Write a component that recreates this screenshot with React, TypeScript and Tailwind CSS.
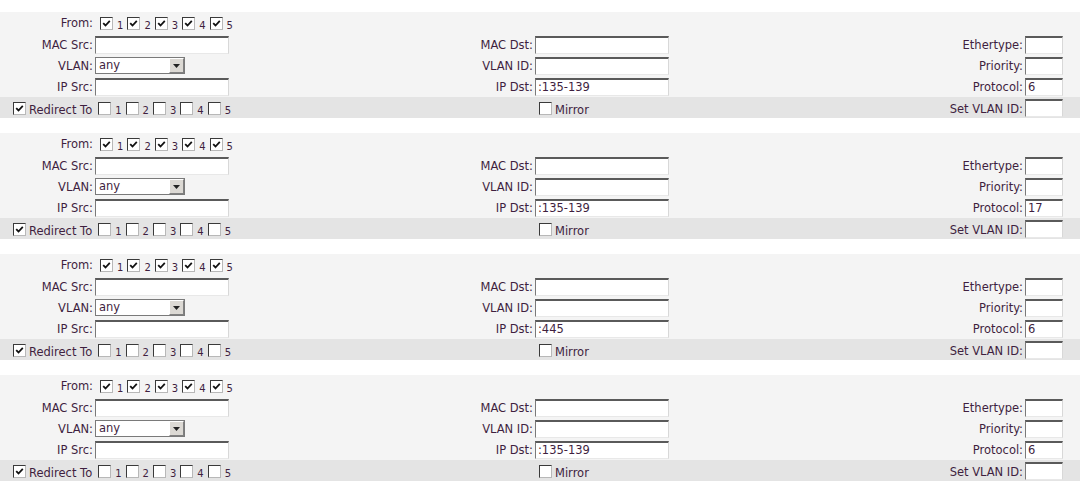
import React from "react";

interface RuleInterface {
    ipDst: string;
    protocol: string;
}

const rules: RuleInterface[] = [
    { ipDst: ":135-139", protocol: "6" },
    { ipDst: ":135-139", protocol: "17" },
    { ipDst: ":445", protocol: "6" },
    { ipDst: ":135-139", protocol: "6" },
];

const rowGrid = "grid grid-cols-[95px_365px_75px_400px_90px_55px] items-center";

function Check({ checked }: { checked: boolean }) {
    return (
        <span className="inline-flex w-[13px] h-[13px] bg-white border border-t-[#3a3a3a] border-l-[#3a3a3a] border-b-[#b8b8b8] border-r-[#b8b8b8] items-center justify-center shrink-0">
            {checked && (
                <svg width="9" height="9" viewBox="0 0 9 9">
                    <path d="M1.2 4.2 L3.5 6.5 L7.8 1.8" stroke="#111" strokeWidth="1.8" fill="none" />
                </svg>
            )}
        </span>
    );
}

function Ports({ checked }: { checked: boolean }) {
    return (
        <div className="flex items-center">
            {[1, 2, 3, 4, 5].map((n) => (
                <span key={n} className="flex items-center mr-[2px]">
                    <Check checked={checked} />
                    <span className="text-[10px] ml-[4px] mr-[2px] mt-[5px]">{n}</span>
                </span>
            ))}
        </div>
    );
}

function TextBox({ value = "", w }: { value?: string; w: string }) {
    return (
        <div className={`${w} h-[18px] bg-white border border-t-2 border-t-[#5a5a5a] border-l-[#7a7a7a] border-r-[#d8d8d8] border-b-[#e8e8e8] pl-[2px] leading-[15px] overflow-hidden`}>
            {value}
        </div>
    );
}

function Label({ text }: { text: string }) {
    return <div className="text-right pr-[2px] pt-[2px] whitespace-nowrap">{text}</div>;
}

function RuleBlock({ rule }: { rule: RuleInterface }) {
    return (
        <div className="mb-[15px]">
            <div className="bg-[#f4f4f4]">
                <div className={`${rowGrid} h-[22px]`}>
                    <Label text="From:" />
                    <div className="pl-[5px]"><Ports checked={true} /></div>
                </div>
                <div className={`${rowGrid} h-[21px]`}>
                    <Label text="MAC Src:" />
                    <TextBox w="w-[134px]" />
                    <Label text="MAC Dst:" />
                    <TextBox w="w-[134px]" />
                    <Label text="Ethertype:" />
                    <TextBox w="w-[38px]" />
                </div>
                <div className={`${rowGrid} h-[21px]`}>
                    <Label text="VLAN:" />
                    <div className="w-[90px] h-[17px] bg-white border border-[#7a7a7a] flex items-center justify-between">
                        <span className="pl-[3px]">any</span>
                        <span className="w-[15px] h-[15px] bg-[#dcd9d4] border border-t-white border-l-white border-b-[#808080] border-r-[#808080] flex items-center justify-center">
                            <svg width="7" height="4" viewBox="0 0 7 4"><path d="M0 0 H7 L3.5 4 Z" fill="#222" /></svg>
                        </span>
                    </div>
                    <Label text="VLAN ID:" />
                    <TextBox w="w-[134px]" />
                    <Label text="Priority:" />
                    <TextBox w="w-[38px]" />
                </div>
                <div className={`${rowGrid} h-[21px]`}>
                    <Label text="IP Src:" />
                    <TextBox w="w-[134px]" />
                    <Label text="IP Dst:" />
                    <TextBox w="w-[134px]" value={rule.ipDst} />
                    <Label text="Protocol:" />
                    <TextBox w="w-[38px]" value={rule.protocol} />
                </div>
            </div>
            <div className={`${rowGrid} h-[21px] bg-[#e4e4e4]`}>
                <div className="col-span-2 flex items-center pl-[13px]">
                    <Check checked={true} />
                    <span className="ml-[3px] mr-[6px] mt-[4px]">Redirect To</span>
                    <Ports checked={false} />
                </div>
                <div />
                <div className="flex items-center pl-[4px]">
                    <Check checked={false} />
                    <span className="ml-[3px] mt-[5px]">Mirror</span>
                </div>
                <Label text="Set VLAN ID:" />
                <TextBox w="w-[38px]" />
            </div>
        </div>
    );
}

export default function App() {
    return (
        <div className="w-[1080px] h-[492px] overflow-hidden bg-white pt-[12px] font-['DejaVu_Sans',sans-serif] text-[11.5px] text-[#3f1f3f]">
            {rules.map((rule, i) => (
                <RuleBlock key={i} rule={rule} />
            ))}
        </div>
    );
}
